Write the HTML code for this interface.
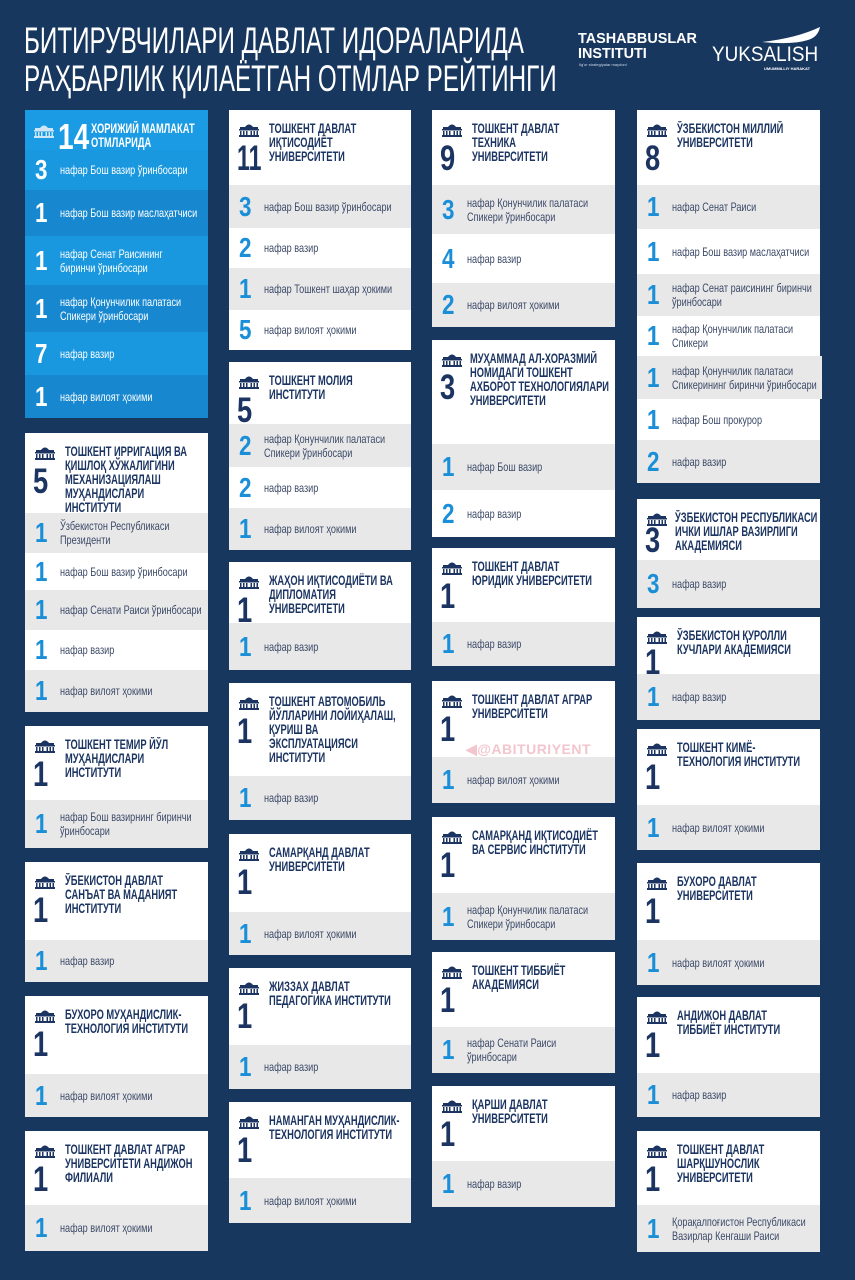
<!DOCTYPE html>
<html><head><meta charset="utf-8"><style>
*{margin:0;padding:0;box-sizing:border-box}
body{width:855px;height:1280px;background:#17375f;position:relative;overflow:hidden;font-family:"Liberation Sans",sans-serif}
.c{position:absolute;background:#fff;overflow:hidden}
.h{position:relative}
.ic{position:absolute;left:9px;top:12px;width:22px;height:15px}
.bn{position:absolute;left:8px;top:31px;font-weight:bold;font-size:35px;line-height:1;color:#1b3461;transform:scaleX(0.78);transform-origin:left top;white-space:nowrap}
.t{position:absolute;left:40px;top:12px;font-weight:bold;font-size:13.5px;line-height:14px;color:#1b3461;white-space:nowrap;transform:scaleX(0.69);transform-origin:left top}
.r{display:flex;align-items:center;padding-left:10px;white-space:nowrap}
.r b{font-size:28px;line-height:1;color:#1a8fd8;width:25px;flex:none;font-weight:bold;display:inline-block;transform:scaleX(0.8);transform-origin:left center}
.r span{font-size:12px;line-height:14px;color:#3b4966;display:inline-block;transform:scaleX(0.76);transform-origin:left center}
.g{background:#e8e8e9}
.bl{background:#1595dd}
.bl .r b,.bl .r span{color:#fff}
.b1{background:#1998df}.b2{background:#1788cf}
</style></head><body>

<div style="position:absolute;left:24px;top:22px;color:#fff;font-size:37px;line-height:38px;white-space:nowrap;transform:scaleX(0.655);transform-origin:left top">БИТИРУВЧИЛАРИ ДАВЛАТ ИДОРАЛАРИДА<br>РАҲБАРЛИК ҚИЛАЁТГАН ОТМЛАР РЕЙТИНГИ</div>

<div style="position:absolute;left:578px;top:31px;color:#fff;font-weight:bold;font-size:15px;line-height:15px;white-space:nowrap;transform:scaleX(0.96);transform-origin:left top">TASHABBUSLAR<br>INSTITUTI</div>
<div style="position:absolute;left:579px;top:62px;color:#cfd8e6;font-size:4px">Ilg'or strategiyalar maydoni</div>
<svg style="position:absolute;left:712px;top:24px" width="115" height="45"><path d="M50 18 Q85 14 108 3 Q106 13 96 16 Q80 21 50 18Z" fill="#fff"/></svg>
<div style="position:absolute;left:712px;top:43px;color:#fff;font-size:21px;line-height:24px;white-space:nowrap;transform:scaleX(0.9);transform-origin:left top">YUKSALISH</div>
<div style="position:absolute;left:764px;top:66px;color:#fff;font-size:4px;font-weight:bold">UMUMMILLIY HARAKAT</div>

<!-- blue card -->
<div class="c bl" style="left:25px;top:110px;width:183px;height:308px">
 <div class="h" style="height:40px;background:#1a9be3">
  <svg class="ic" style="left:8px;top:13px" viewBox="0 0 22 15"><g fill="#cfe6f7"><path d="M7 5 Q11 0 15 5Z"/><rect x="2" y="5" width="18" height="2"/><rect x="1" y="7" width="20" height="1.5"/><rect x="2" y="9" width="1.5" height="4"/><rect x="5" y="9" width="1.5" height="4"/><rect x="8" y="9" width="1.5" height="4"/><rect x="12.5" y="9" width="1.5" height="4"/><rect x="15.5" y="9" width="1.5" height="4"/><rect x="18.5" y="9" width="1.5" height="4"/><rect x="1" y="13" width="20" height="2"/></g></svg>
  <div style="position:absolute;left:33px;top:9px;color:#fff;font-weight:bold;font-size:36px;line-height:1;transform:scaleX(0.78);transform-origin:left top">14</div>
  <div class="t" style="left:66px;top:12px;color:#fff">ХОРИЖИЙ МАМЛАКАТ<br>ОТМЛАРИДА</div>
 </div>
 <div class="r b1" style="height:40px"><b>3</b><span>нафар Бош вазир ўринбосари</span></div>
 <div class="r b2" style="height:46px"><b>1</b><span>нафар Бош вазир маслаҳатчиси</span></div>
 <div class="r b1" style="height:49px"><b>1</b><span>нафар Сенат Раисининг<br>биринчи ўринбосари</span></div>
 <div class="r b2" style="height:47px"><b>1</b><span>нафар Қонунчилик палатаси<br>Спикери ўринбосари</span></div>
 <div class="r b1" style="height:43px"><b>7</b><span>нафар вазир</span></div>
 <div class="r b2" style="height:43px"><b>1</b><span>нафар вилоят ҳокими</span></div>
</div>

<!-- COLUMN 1 -->
<div class="c" style="left:25px;top:433px;width:183px;height:279px">
 <div class="h" style="height:80px"><svg class="ic" viewBox="0 0 22 15"><g fill="#1b3461"><path d="M7 5 Q11 0 15 5Z"/><rect x="2" y="5" width="18" height="2"/><rect x="1" y="7" width="20" height="1.5"/><rect x="2" y="9" width="1.5" height="4"/><rect x="5" y="9" width="1.5" height="4"/><rect x="8" y="9" width="1.5" height="4"/><rect x="12.5" y="9" width="1.5" height="4"/><rect x="15.5" y="9" width="1.5" height="4"/><rect x="18.5" y="9" width="1.5" height="4"/><rect x="1" y="13" width="20" height="2"/></g></svg><div class="bn">5</div><div class="t">ТОШКЕНТ ИРРИГАЦИЯ ВА<br>ҚИШЛОҚ ХЎЖАЛИГИНИ<br>МЕХАНИЗАЦИЯЛАШ<br>МУҲАНДИСЛАРИ<br>ИНСТИТУТИ</div></div>
 <div class="r g" style="height:40px"><b>1</b><span>Ўзбекистон Республикаси<br>Президенти</span></div>
 <div class="r" style="height:37px"><b>1</b><span>нафар Бош вазир ўринбосари</span></div>
 <div class="r g" style="height:40px"><b>1</b><span>нафар Сенати Раиси ўринбосари</span></div>
 <div class="r" style="height:40px"><b>1</b><span>нафар вазир</span></div>
 <div class="r g" style="height:42px"><b>1</b><span>нафар вилоят ҳокими</span></div>
</div>

<div class="c" style="left:25px;top:726px;width:183px;height:122px">
 <div class="h" style="height:74px"><svg class="ic" viewBox="0 0 22 15"><g fill="#1b3461"><path d="M7 5 Q11 0 15 5Z"/><rect x="2" y="5" width="18" height="2"/><rect x="1" y="7" width="20" height="1.5"/><rect x="2" y="9" width="1.5" height="4"/><rect x="5" y="9" width="1.5" height="4"/><rect x="8" y="9" width="1.5" height="4"/><rect x="12.5" y="9" width="1.5" height="4"/><rect x="15.5" y="9" width="1.5" height="4"/><rect x="18.5" y="9" width="1.5" height="4"/><rect x="1" y="13" width="20" height="2"/></g></svg><div class="bn">1</div><div class="t">ТОШКЕНТ ТЕМИР ЙЎЛ<br>МУҲАНДИСЛАРИ<br>ИНСТИТУТИ</div></div>
 <div class="r g" style="height:48px"><b>1</b><span>нафар Бош вазирнинг биринчи<br>ўринбосари</span></div>
</div>

<div class="c" style="left:25px;top:862px;width:183px;height:120px">
 <div class="h" style="height:78px"><svg class="ic" viewBox="0 0 22 15"><g fill="#1b3461"><path d="M7 5 Q11 0 15 5Z"/><rect x="2" y="5" width="18" height="2"/><rect x="1" y="7" width="20" height="1.5"/><rect x="2" y="9" width="1.5" height="4"/><rect x="5" y="9" width="1.5" height="4"/><rect x="8" y="9" width="1.5" height="4"/><rect x="12.5" y="9" width="1.5" height="4"/><rect x="15.5" y="9" width="1.5" height="4"/><rect x="18.5" y="9" width="1.5" height="4"/><rect x="1" y="13" width="20" height="2"/></g></svg><div class="bn">1</div><div class="t">ЎБЕКИСТОН ДАВЛАТ<br>САНЪАТ ВА МАДАНИЯТ<br>ИНСТИТУТИ</div></div>
 <div class="r g" style="height:42px"><b>1</b><span>нафар вазир</span></div>
</div>

<div class="c" style="left:25px;top:996px;width:183px;height:121px">
 <div class="h" style="height:78px"><svg class="ic" viewBox="0 0 22 15"><g fill="#1b3461"><path d="M7 5 Q11 0 15 5Z"/><rect x="2" y="5" width="18" height="2"/><rect x="1" y="7" width="20" height="1.5"/><rect x="2" y="9" width="1.5" height="4"/><rect x="5" y="9" width="1.5" height="4"/><rect x="8" y="9" width="1.5" height="4"/><rect x="12.5" y="9" width="1.5" height="4"/><rect x="15.5" y="9" width="1.5" height="4"/><rect x="18.5" y="9" width="1.5" height="4"/><rect x="1" y="13" width="20" height="2"/></g></svg><div class="bn">1</div><div class="t">БУХОРО МУҲАНДИСЛИК-<br>ТЕХНОЛОГИЯ ИНСТИТУТИ</div></div>
 <div class="r g" style="height:43px"><b>1</b><span>нафар вилоят ҳокими</span></div>
</div>

<div class="c" style="left:25px;top:1131px;width:183px;height:120px">
 <div class="h" style="height:74px"><svg class="ic" viewBox="0 0 22 15"><g fill="#1b3461"><path d="M7 5 Q11 0 15 5Z"/><rect x="2" y="5" width="18" height="2"/><rect x="1" y="7" width="20" height="1.5"/><rect x="2" y="9" width="1.5" height="4"/><rect x="5" y="9" width="1.5" height="4"/><rect x="8" y="9" width="1.5" height="4"/><rect x="12.5" y="9" width="1.5" height="4"/><rect x="15.5" y="9" width="1.5" height="4"/><rect x="18.5" y="9" width="1.5" height="4"/><rect x="1" y="13" width="20" height="2"/></g></svg><div class="bn">1</div><div class="t">ТОШКЕНТ ДАВЛАТ АГРАР<br>УНИВЕРСИТЕТИ АНДИЖОН<br>ФИЛИАЛИ</div></div>
 <div class="r g" style="height:46px"><b>1</b><span>нафар вилоят ҳокими</span></div>
</div>

<!-- COLUMN 2 -->
<div class="c" style="left:229px;top:110px;width:182px;height:240px">
 <div class="h" style="height:75px"><svg class="ic" viewBox="0 0 22 15"><g fill="#1b3461"><path d="M7 5 Q11 0 15 5Z"/><rect x="2" y="5" width="18" height="2"/><rect x="1" y="7" width="20" height="1.5"/><rect x="2" y="9" width="1.5" height="4"/><rect x="5" y="9" width="1.5" height="4"/><rect x="8" y="9" width="1.5" height="4"/><rect x="12.5" y="9" width="1.5" height="4"/><rect x="15.5" y="9" width="1.5" height="4"/><rect x="18.5" y="9" width="1.5" height="4"/><rect x="1" y="13" width="20" height="2"/></g></svg><div class="bn" style="transform:scaleX(0.66)">11</div><div class="t">ТОШКЕНТ ДАВЛАТ<br>ИҚТИСОДИЁТ<br>УНИВЕРСИТЕТИ</div></div>
 <div class="r g" style="height:43px"><b>3</b><span>нафар Бош вазир ўринбосари</span></div>
 <div class="r" style="height:40px"><b>2</b><span>нафар вазир</span></div>
 <div class="r g" style="height:42px"><b>1</b><span>нафар Тошкент шаҳар ҳокими</span></div>
 <div class="r" style="height:40px"><b>5</b><span>нафар вилоят ҳокими</span></div>
</div>

<div class="c" style="left:229px;top:362px;width:182px;height:188px">
 <div class="h" style="height:62px"><svg class="ic" viewBox="0 0 22 15"><g fill="#1b3461"><path d="M7 5 Q11 0 15 5Z"/><rect x="2" y="5" width="18" height="2"/><rect x="1" y="7" width="20" height="1.5"/><rect x="2" y="9" width="1.5" height="4"/><rect x="5" y="9" width="1.5" height="4"/><rect x="8" y="9" width="1.5" height="4"/><rect x="12.5" y="9" width="1.5" height="4"/><rect x="15.5" y="9" width="1.5" height="4"/><rect x="18.5" y="9" width="1.5" height="4"/><rect x="1" y="13" width="20" height="2"/></g></svg><div class="bn">5</div><div class="t">ТОШКЕНТ МОЛИЯ<br>ИНСТИТУТИ</div></div>
 <div class="r g" style="height:43px"><b>2</b><span>нафар  Қонунчилик палатаси<br>Спикери ўринбосари</span></div>
 <div class="r" style="height:41px"><b>2</b><span>нафар вазир</span></div>
 <div class="r g" style="height:42px"><b>1</b><span>нафар вилоят ҳокими</span></div>
</div>

<div class="c" style="left:229px;top:562px;width:182px;height:108px">
 <div class="h" style="height:61px"><svg class="ic" viewBox="0 0 22 15"><g fill="#1b3461"><path d="M7 5 Q11 0 15 5Z"/><rect x="2" y="5" width="18" height="2"/><rect x="1" y="7" width="20" height="1.5"/><rect x="2" y="9" width="1.5" height="4"/><rect x="5" y="9" width="1.5" height="4"/><rect x="8" y="9" width="1.5" height="4"/><rect x="12.5" y="9" width="1.5" height="4"/><rect x="15.5" y="9" width="1.5" height="4"/><rect x="18.5" y="9" width="1.5" height="4"/><rect x="1" y="13" width="20" height="2"/></g></svg><div class="bn">1</div><div class="t">ЖАҲОН ИҚТИСОДИЁТИ ВА<br>ДИПЛОМАТИЯ<br>УНИВЕРСИТЕТИ</div></div>
 <div class="r g" style="height:47px"><b>1</b><span>нафар вазир</span></div>
</div>

<div class="c" style="left:229px;top:683px;width:182px;height:137px">
 <div class="h" style="height:93px"><svg class="ic" viewBox="0 0 22 15"><g fill="#1b3461"><path d="M7 5 Q11 0 15 5Z"/><rect x="2" y="5" width="18" height="2"/><rect x="1" y="7" width="20" height="1.5"/><rect x="2" y="9" width="1.5" height="4"/><rect x="5" y="9" width="1.5" height="4"/><rect x="8" y="9" width="1.5" height="4"/><rect x="12.5" y="9" width="1.5" height="4"/><rect x="15.5" y="9" width="1.5" height="4"/><rect x="18.5" y="9" width="1.5" height="4"/><rect x="1" y="13" width="20" height="2"/></g></svg><div class="bn">1</div><div class="t">ТОШКЕНТ АВТОМОБИЛЬ<br>ЙЎЛЛАРИНИ ЛОЙИҲАЛАШ,<br>ҚУРИШ ВА<br>ЭКСПЛУАТАЦИЯСИ<br>ИНСТИТУТИ</div></div>
 <div class="r g" style="height:44px"><b>1</b><span>нафар вазир</span></div>
</div>

<div class="c" style="left:229px;top:834px;width:182px;height:121px">
 <div class="h" style="height:78px"><svg class="ic" viewBox="0 0 22 15"><g fill="#1b3461"><path d="M7 5 Q11 0 15 5Z"/><rect x="2" y="5" width="18" height="2"/><rect x="1" y="7" width="20" height="1.5"/><rect x="2" y="9" width="1.5" height="4"/><rect x="5" y="9" width="1.5" height="4"/><rect x="8" y="9" width="1.5" height="4"/><rect x="12.5" y="9" width="1.5" height="4"/><rect x="15.5" y="9" width="1.5" height="4"/><rect x="18.5" y="9" width="1.5" height="4"/><rect x="1" y="13" width="20" height="2"/></g></svg><div class="bn">1</div><div class="t">САМАРҚАНД ДАВЛАТ<br>УНИВЕРСИТЕТИ</div></div>
 <div class="r g" style="height:43px"><b>1</b><span>нафар вилоят ҳокими</span></div>
</div>

<div class="c" style="left:229px;top:968px;width:182px;height:121px">
 <div class="h" style="height:77px"><svg class="ic" viewBox="0 0 22 15"><g fill="#1b3461"><path d="M7 5 Q11 0 15 5Z"/><rect x="2" y="5" width="18" height="2"/><rect x="1" y="7" width="20" height="1.5"/><rect x="2" y="9" width="1.5" height="4"/><rect x="5" y="9" width="1.5" height="4"/><rect x="8" y="9" width="1.5" height="4"/><rect x="12.5" y="9" width="1.5" height="4"/><rect x="15.5" y="9" width="1.5" height="4"/><rect x="18.5" y="9" width="1.5" height="4"/><rect x="1" y="13" width="20" height="2"/></g></svg><div class="bn">1</div><div class="t">ЖИЗЗАХ ДАВЛАТ<br>ПЕДАГОГИКА ИНСТИТУТИ</div></div>
 <div class="r g" style="height:44px"><b>1</b><span>нафар вазир</span></div>
</div>

<div class="c" style="left:229px;top:1102px;width:182px;height:121px">
 <div class="h" style="height:76px"><svg class="ic" viewBox="0 0 22 15"><g fill="#1b3461"><path d="M7 5 Q11 0 15 5Z"/><rect x="2" y="5" width="18" height="2"/><rect x="1" y="7" width="20" height="1.5"/><rect x="2" y="9" width="1.5" height="4"/><rect x="5" y="9" width="1.5" height="4"/><rect x="8" y="9" width="1.5" height="4"/><rect x="12.5" y="9" width="1.5" height="4"/><rect x="15.5" y="9" width="1.5" height="4"/><rect x="18.5" y="9" width="1.5" height="4"/><rect x="1" y="13" width="20" height="2"/></g></svg><div class="bn">1</div><div class="t">НАМАНГАН МУҲАНДИСЛИК-<br>ТЕХНОЛОГИЯ ИНСТИТУТИ</div></div>
 <div class="r g" style="height:45px"><b>1</b><span>нафар вилоят ҳокими</span></div>
</div>

<!-- COLUMN 3 -->
<div class="c" style="left:432px;top:110px;width:183px;height:217px">
 <div class="h" style="height:75px"><svg class="ic" viewBox="0 0 22 15"><g fill="#1b3461"><path d="M7 5 Q11 0 15 5Z"/><rect x="2" y="5" width="18" height="2"/><rect x="1" y="7" width="20" height="1.5"/><rect x="2" y="9" width="1.5" height="4"/><rect x="5" y="9" width="1.5" height="4"/><rect x="8" y="9" width="1.5" height="4"/><rect x="12.5" y="9" width="1.5" height="4"/><rect x="15.5" y="9" width="1.5" height="4"/><rect x="18.5" y="9" width="1.5" height="4"/><rect x="1" y="13" width="20" height="2"/></g></svg><div class="bn">9</div><div class="t">ТОШКЕНТ ДАВЛАТ<br>ТЕХНИКА<br>УНИВЕРСИТЕТИ</div></div>
 <div class="r g" style="height:49px"><b>3</b><span>нафар Қонунчилик палатаси<br>Спикери ўринбосари</span></div>
 <div class="r" style="height:49px"><b>4</b><span>нафар вазир</span></div>
 <div class="r g" style="height:44px"><b>2</b><span>нафар вилоят ҳокими</span></div>
</div>

<div class="c" style="left:432px;top:340px;width:183px;height:197px">
 <div class="h" style="height:104px"><svg class="ic" viewBox="0 0 22 15"><g fill="#1b3461"><path d="M7 5 Q11 0 15 5Z"/><rect x="2" y="5" width="18" height="2"/><rect x="1" y="7" width="20" height="1.5"/><rect x="2" y="9" width="1.5" height="4"/><rect x="5" y="9" width="1.5" height="4"/><rect x="8" y="9" width="1.5" height="4"/><rect x="12.5" y="9" width="1.5" height="4"/><rect x="15.5" y="9" width="1.5" height="4"/><rect x="18.5" y="9" width="1.5" height="4"/><rect x="1" y="13" width="20" height="2"/></g></svg><div class="bn" style="top:30px">3</div><div class="t" style="left:38px">МУҲАММАД АЛ-ХОРАЗМИЙ<br>НОМИДАГИ ТОШКЕНТ<br>АХБОРОТ ТЕХНОЛОГИЯЛАРИ<br>УНИВЕРСИТЕТИ</div></div>
 <div class="r g" style="height:46px"><b>1</b><span>нафар Бош вазир</span></div>
 <div class="r" style="height:47px"><b>2</b><span>нафар вазир</span></div>
</div>

<div class="c" style="left:432px;top:548px;width:183px;height:118px">
 <div class="h" style="height:74px"><svg class="ic" viewBox="0 0 22 15"><g fill="#1b3461"><path d="M7 5 Q11 0 15 5Z"/><rect x="2" y="5" width="18" height="2"/><rect x="1" y="7" width="20" height="1.5"/><rect x="2" y="9" width="1.5" height="4"/><rect x="5" y="9" width="1.5" height="4"/><rect x="8" y="9" width="1.5" height="4"/><rect x="12.5" y="9" width="1.5" height="4"/><rect x="15.5" y="9" width="1.5" height="4"/><rect x="18.5" y="9" width="1.5" height="4"/><rect x="1" y="13" width="20" height="2"/></g></svg><div class="bn">1</div><div class="t">ТОШКЕНТ ДАВЛАТ<br>ЮРИДИК УНИВЕРСИТЕТИ</div></div>
 <div class="r g" style="height:44px"><b>1</b><span>нафар вазир</span></div>
</div>

<div class="c" style="left:432px;top:681px;width:183px;height:122px">
 <div class="h" style="height:76px"><svg class="ic" viewBox="0 0 22 15"><g fill="#1b3461"><path d="M7 5 Q11 0 15 5Z"/><rect x="2" y="5" width="18" height="2"/><rect x="1" y="7" width="20" height="1.5"/><rect x="2" y="9" width="1.5" height="4"/><rect x="5" y="9" width="1.5" height="4"/><rect x="8" y="9" width="1.5" height="4"/><rect x="12.5" y="9" width="1.5" height="4"/><rect x="15.5" y="9" width="1.5" height="4"/><rect x="18.5" y="9" width="1.5" height="4"/><rect x="1" y="13" width="20" height="2"/></g></svg><div class="bn">1</div><div class="t">ТОШКЕНТ ДАВЛАТ АГРАР<br>УНИВЕРСИТЕТИ</div>
 <div style="position:absolute;left:34px;top:60px;color:#f2c6cc;font-weight:bold;font-size:14px;letter-spacing:0.5px;white-space:nowrap">◀@ABITURIYENT</div></div>
 <div class="r g" style="height:46px"><b>1</b><span>нафар вилоят ҳокими</span></div>
</div>

<div class="c" style="left:432px;top:817px;width:183px;height:123px">
 <div class="h" style="height:76px"><svg class="ic" viewBox="0 0 22 15"><g fill="#1b3461"><path d="M7 5 Q11 0 15 5Z"/><rect x="2" y="5" width="18" height="2"/><rect x="1" y="7" width="20" height="1.5"/><rect x="2" y="9" width="1.5" height="4"/><rect x="5" y="9" width="1.5" height="4"/><rect x="8" y="9" width="1.5" height="4"/><rect x="12.5" y="9" width="1.5" height="4"/><rect x="15.5" y="9" width="1.5" height="4"/><rect x="18.5" y="9" width="1.5" height="4"/><rect x="1" y="13" width="20" height="2"/></g></svg><div class="bn">1</div><div class="t">САМАРҚАНД ИҚТИСОДИЁТ<br>ВА СЕРВИС ИНСТИТУТИ</div></div>
 <div class="r g" style="height:47px"><b>1</b><span>нафар Қонунчилик палатаси<br>Спикери ўринбосари</span></div>
</div>

<div class="c" style="left:432px;top:952px;width:183px;height:121px">
 <div class="h" style="height:75px"><svg class="ic" viewBox="0 0 22 15"><g fill="#1b3461"><path d="M7 5 Q11 0 15 5Z"/><rect x="2" y="5" width="18" height="2"/><rect x="1" y="7" width="20" height="1.5"/><rect x="2" y="9" width="1.5" height="4"/><rect x="5" y="9" width="1.5" height="4"/><rect x="8" y="9" width="1.5" height="4"/><rect x="12.5" y="9" width="1.5" height="4"/><rect x="15.5" y="9" width="1.5" height="4"/><rect x="18.5" y="9" width="1.5" height="4"/><rect x="1" y="13" width="20" height="2"/></g></svg><div class="bn">1</div><div class="t">ТОШКЕНТ ТИББИЁТ<br>АКАДЕМИЯСИ</div></div>
 <div class="r g" style="height:46px"><b>1</b><span>нафар Сенати Раиси<br>ўринбосари</span></div>
</div>

<div class="c" style="left:432px;top:1086px;width:183px;height:121px">
 <div class="h" style="height:75px"><svg class="ic" viewBox="0 0 22 15"><g fill="#1b3461"><path d="M7 5 Q11 0 15 5Z"/><rect x="2" y="5" width="18" height="2"/><rect x="1" y="7" width="20" height="1.5"/><rect x="2" y="9" width="1.5" height="4"/><rect x="5" y="9" width="1.5" height="4"/><rect x="8" y="9" width="1.5" height="4"/><rect x="12.5" y="9" width="1.5" height="4"/><rect x="15.5" y="9" width="1.5" height="4"/><rect x="18.5" y="9" width="1.5" height="4"/><rect x="1" y="13" width="20" height="2"/></g></svg><div class="bn">1</div><div class="t">ҚАРШИ ДАВЛАТ<br>УНИВЕРСИТЕТИ</div></div>
 <div class="r g" style="height:46px"><b>1</b><span>нафар вазир</span></div>
</div>

<!-- COLUMN 4 -->
<div class="c" style="left:637px;top:110px;width:183px;height:373px;overflow:visible">
 <div class="h" style="height:75px"><svg class="ic" viewBox="0 0 22 15"><g fill="#1b3461"><path d="M7 5 Q11 0 15 5Z"/><rect x="2" y="5" width="18" height="2"/><rect x="1" y="7" width="20" height="1.5"/><rect x="2" y="9" width="1.5" height="4"/><rect x="5" y="9" width="1.5" height="4"/><rect x="8" y="9" width="1.5" height="4"/><rect x="12.5" y="9" width="1.5" height="4"/><rect x="15.5" y="9" width="1.5" height="4"/><rect x="18.5" y="9" width="1.5" height="4"/><rect x="1" y="13" width="20" height="2"/></g></svg><div class="bn">8</div><div class="t">ЎЗБЕКИСТОН МИЛЛИЙ<br>УНИВЕРСИТЕТИ</div></div>
 <div class="r g" style="height:44px"><b>1</b><span>нафар Сенат Раиси</span></div>
 <div class="r" style="height:45px"><b>1</b><span>нафар Бош вазир маслаҳатчиси</span></div>
 <div class="r g" style="height:42px"><b>1</b><span>нафар Сенат раисининг биринчи<br>ўринбосари</span></div>
 <div class="r" style="height:40px"><b>1</b><span>нафар Қонунчилик палатаси<br>Спикери</span></div>
 <div class="r g" style="height:43px;width:185px"><b>1</b><span>нафар Қонунчилик палатаси<br>Спикерининг биринчи ўринбосари</span></div>
 <div class="r" style="height:41px"><b>1</b><span>нафар Бош прокурор</span></div>
 <div class="r g" style="height:43px"><b>2</b><span>нафар вазир</span></div>
</div>

<div class="c" style="left:637px;top:499px;width:183px;height:109px">
 <div class="h" style="height:61px"><svg class="ic" viewBox="0 0 22 15"><g fill="#1b3461"><path d="M7 5 Q11 0 15 5Z"/><rect x="2" y="5" width="18" height="2"/><rect x="1" y="7" width="20" height="1.5"/><rect x="2" y="9" width="1.5" height="4"/><rect x="5" y="9" width="1.5" height="4"/><rect x="8" y="9" width="1.5" height="4"/><rect x="12.5" y="9" width="1.5" height="4"/><rect x="15.5" y="9" width="1.5" height="4"/><rect x="18.5" y="9" width="1.5" height="4"/><rect x="1" y="13" width="20" height="2"/></g></svg><div class="bn" style="top:24px">3</div><div class="t" style="left:38px">ЎЗБЕКИСТОН РЕСПУБЛИКАСИ<br>ИЧКИ ИШЛАР ВАЗИРЛИГИ<br>АКАДЕМИЯСИ</div></div>
 <div class="r g" style="height:48px"><b>3</b><span>нафар вазир</span></div>
</div>

<div class="c" style="left:637px;top:617px;width:183px;height:103px">
 <div class="h" style="height:57px"><svg class="ic" viewBox="0 0 22 15"><g fill="#1b3461"><path d="M7 5 Q11 0 15 5Z"/><rect x="2" y="5" width="18" height="2"/><rect x="1" y="7" width="20" height="1.5"/><rect x="2" y="9" width="1.5" height="4"/><rect x="5" y="9" width="1.5" height="4"/><rect x="8" y="9" width="1.5" height="4"/><rect x="12.5" y="9" width="1.5" height="4"/><rect x="15.5" y="9" width="1.5" height="4"/><rect x="18.5" y="9" width="1.5" height="4"/><rect x="1" y="13" width="20" height="2"/></g></svg><div class="bn" style="top:28px">1</div><div class="t">ЎЗБЕКИСТОН ҚУРОЛЛИ<br>КУЧЛАРИ АКАДЕМИЯСИ</div></div>
 <div class="r g" style="height:46px"><b>1</b><span>нафар вазир</span></div>
</div>

<div class="c" style="left:637px;top:729px;width:183px;height:121px">
 <div class="h" style="height:76px"><svg class="ic" viewBox="0 0 22 15"><g fill="#1b3461"><path d="M7 5 Q11 0 15 5Z"/><rect x="2" y="5" width="18" height="2"/><rect x="1" y="7" width="20" height="1.5"/><rect x="2" y="9" width="1.5" height="4"/><rect x="5" y="9" width="1.5" height="4"/><rect x="8" y="9" width="1.5" height="4"/><rect x="12.5" y="9" width="1.5" height="4"/><rect x="15.5" y="9" width="1.5" height="4"/><rect x="18.5" y="9" width="1.5" height="4"/><rect x="1" y="13" width="20" height="2"/></g></svg><div class="bn">1</div><div class="t">ТОШКЕНТ КИМЁ-<br>ТЕХНОЛОГИЯ ИНСТИТУТИ</div></div>
 <div class="r g" style="height:45px"><b>1</b><span>нафар вилоят ҳокими</span></div>
</div>

<div class="c" style="left:637px;top:863px;width:183px;height:122px">
 <div class="h" style="height:77px"><svg class="ic" viewBox="0 0 22 15"><g fill="#1b3461"><path d="M7 5 Q11 0 15 5Z"/><rect x="2" y="5" width="18" height="2"/><rect x="1" y="7" width="20" height="1.5"/><rect x="2" y="9" width="1.5" height="4"/><rect x="5" y="9" width="1.5" height="4"/><rect x="8" y="9" width="1.5" height="4"/><rect x="12.5" y="9" width="1.5" height="4"/><rect x="15.5" y="9" width="1.5" height="4"/><rect x="18.5" y="9" width="1.5" height="4"/><rect x="1" y="13" width="20" height="2"/></g></svg><div class="bn">1</div><div class="t">БУХОРО ДАВЛАТ<br>УНИВЕРСИТЕТИ</div></div>
 <div class="r g" style="height:45px"><b>1</b><span>нафар вилоят ҳокими</span></div>
</div>

<div class="c" style="left:637px;top:997px;width:183px;height:120px">
 <div class="h" style="height:76px"><svg class="ic" viewBox="0 0 22 15"><g fill="#1b3461"><path d="M7 5 Q11 0 15 5Z"/><rect x="2" y="5" width="18" height="2"/><rect x="1" y="7" width="20" height="1.5"/><rect x="2" y="9" width="1.5" height="4"/><rect x="5" y="9" width="1.5" height="4"/><rect x="8" y="9" width="1.5" height="4"/><rect x="12.5" y="9" width="1.5" height="4"/><rect x="15.5" y="9" width="1.5" height="4"/><rect x="18.5" y="9" width="1.5" height="4"/><rect x="1" y="13" width="20" height="2"/></g></svg><div class="bn">1</div><div class="t">АНДИЖОН ДАВЛАТ<br>ТИББИЁТ ИНСТИТУТИ</div></div>
 <div class="r g" style="height:44px"><b>1</b><span>нафар вазир</span></div>
</div>

<div class="c" style="left:637px;top:1131px;width:183px;height:121px">
 <div class="h" style="height:74px"><svg class="ic" viewBox="0 0 22 15"><g fill="#1b3461"><path d="M7 5 Q11 0 15 5Z"/><rect x="2" y="5" width="18" height="2"/><rect x="1" y="7" width="20" height="1.5"/><rect x="2" y="9" width="1.5" height="4"/><rect x="5" y="9" width="1.5" height="4"/><rect x="8" y="9" width="1.5" height="4"/><rect x="12.5" y="9" width="1.5" height="4"/><rect x="15.5" y="9" width="1.5" height="4"/><rect x="18.5" y="9" width="1.5" height="4"/><rect x="1" y="13" width="20" height="2"/></g></svg><div class="bn">1</div><div class="t">ТОШКЕНТ ДАВЛАТ<br>ШАРҚШУНОСЛИК<br>УНИВЕРСИТЕТИ</div></div>
 <div class="r g" style="height:47px"><b>1</b><span>Қорақалпоғистон Республикаси<br>Вазирлар Кенгаши Раиси</span></div>
</div>

</body></html>
